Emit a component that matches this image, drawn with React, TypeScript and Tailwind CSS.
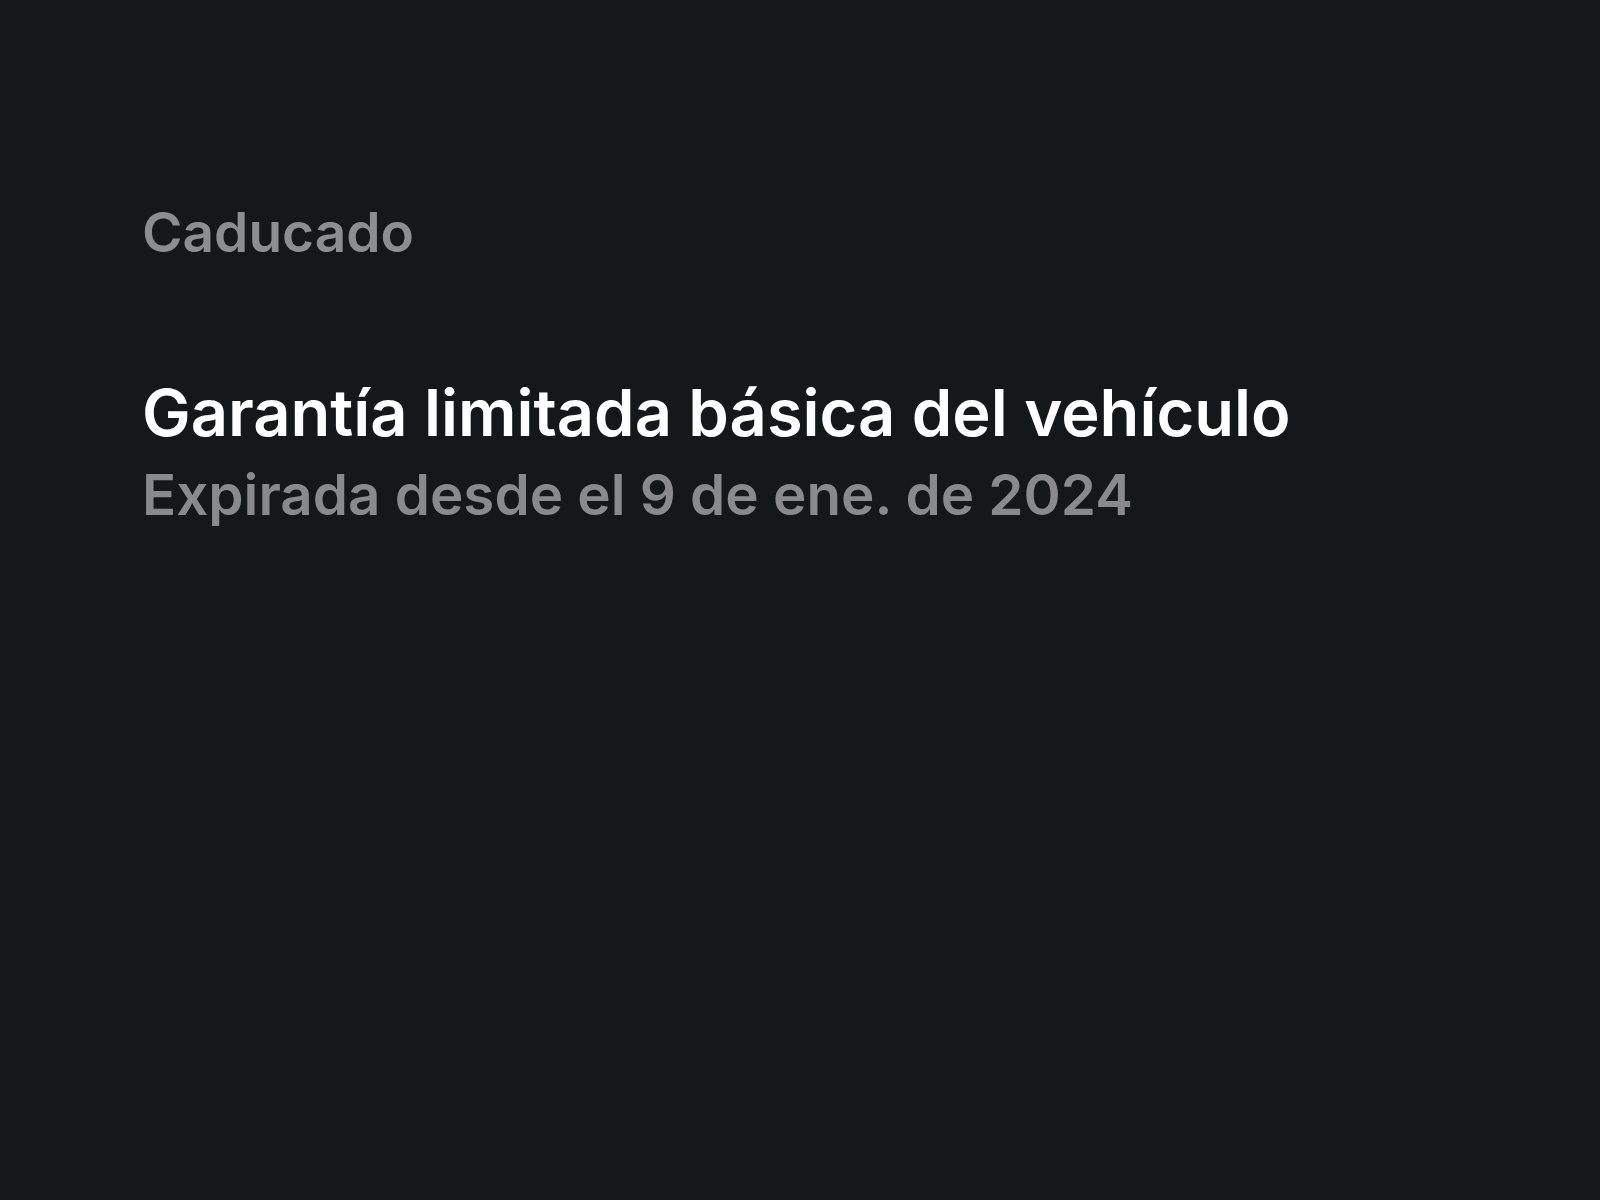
export default function App() {
  return (
    <div className="min-h-screen w-full bg-[#161719] font-['Inter',sans-serif] antialiased">
      <div className="flex flex-col pl-[142px] pt-[205px]">
        <h3 className="text-[55px] font-semibold leading-none text-[#8e8e90]">Caducado</h3>
        <div className="mt-[120px] flex flex-col">
          <h2 className="text-[65px] font-semibold leading-none text-white">Garantía limitada básica del vehículo</h2>
          <p className="mt-[22px] text-[56.5px] font-semibold leading-none text-[#8a8a8c]">
            Expirada desde el 9 de ene. de 2024
          </p>
        </div>
      </div>
    </div>
  );
}
